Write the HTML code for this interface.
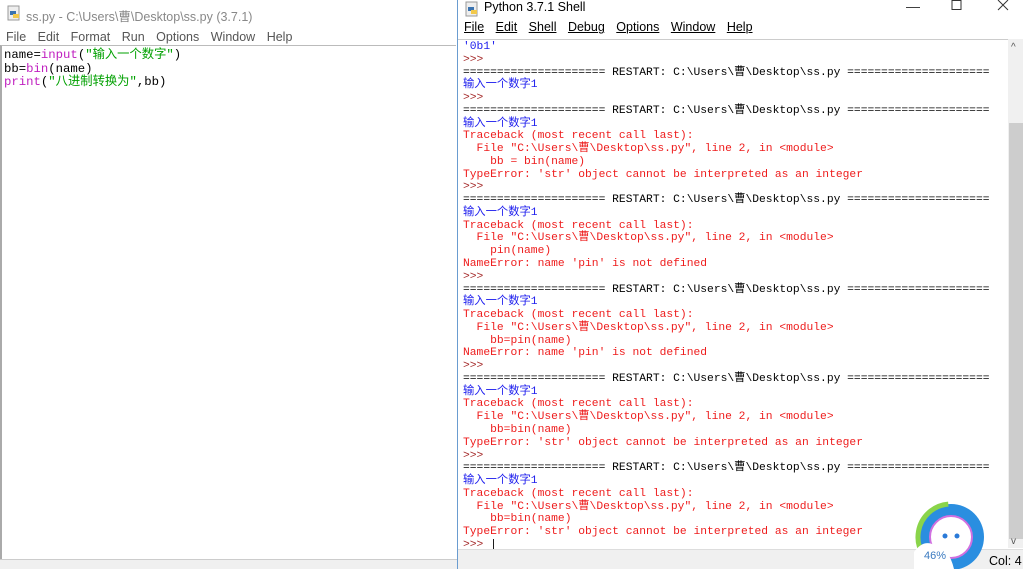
<!DOCTYPE html>
<html><head><meta charset="utf-8"><style>
*{margin:0;padding:0;box-sizing:border-box}
body{width:1023px;height:569px;overflow:hidden;background:#fff;position:relative;font-family:"Liberation Sans","Microsoft YaHei","Noto Sans CJK SC",sans-serif}
.mono{font-family:"Liberation Mono","Noto Sans CJK SC",monospace;font-size:11.3px;white-space:pre}
#left{position:absolute;left:0;top:0;width:458px;height:569px;background:#fff;border-right:1px solid #999}
#left .title{position:absolute;left:26px;top:6px;font-size:12.5px;color:#888}
#left .menu{position:absolute;left:6px;top:30px;font-size:12.5px;color:#555;word-spacing:0}
#left .menu span{margin-right:8px}
#left .ed{position:absolute;left:0;top:45px;width:456px;height:514px;border-top:1px solid #bbb;border-left:2px solid #aaa}
#left .code{position:absolute;left:4px;top:49px;line-height:13.5px;color:#000;font-size:12.3px}
#left .status{position:absolute;left:0;top:559px;width:457px;height:10px;background:#f0f0f0;border-top:1px solid #ccc}
#right{position:absolute;left:457px;top:0;width:566px;height:569px;background:#fff;border-left:1px solid #6a9cd0}
#right .title{position:absolute;left:26px;top:0px;font-size:12.5px;color:#000}
#right .menu{position:absolute;left:6px;top:20px;font-size:12.5px;color:#000}
#right .menu span{margin-right:8px;text-decoration:underline;text-decoration-thickness:1px}
.ctrl{position:absolute;top:-2px;font-size:14px;color:#333}
#right .bd{position:absolute;left:0;top:39px;width:551px;border-top:1px solid #ccc}
#right .txt{position:absolute;left:5px;top:41px;line-height:12.77px;width:545px}
.b{color:#2020ee}.r{color:#ee1c1c}.p{color:#a52a2a}.k{color:#000}.o{color:#c020c0}.g{color:#00a000}
#sb{position:absolute;left:1008px;top:39px;width:15px;height:509px;background:#f0f0f0}
#thumb{position:absolute;left:1009px;top:123px;width:14px;height:416px;background:#cdcdcd}
#st{position:absolute;left:458px;top:549px;width:565px;height:20px;background:#f0f0f0;border-top:1px solid #ddd;font-size:12.5px}
</style></head><body>
<div id="left">
<svg style="position:absolute;left:7px;top:5px" width="15" height="16"><rect x="1" y="1" width="11" height="14" fill="#eee" stroke="#999"/><rect x="3" y="6" width="6" height="4" fill="#3b73b0"/><rect x="6" y="9" width="6" height="4" fill="#f2c94c"/></svg>
<div class="title">ss.py - C:\Users\曹\Desktop\ss.py (3.7.1)</div>
<div class="menu"><span>File</span> <span>Edit</span> <span>Format</span> <span>Run</span> <span>Options</span> <span>Window</span> <span>Help</span></div>
<div class="ed"></div>
<div class="code mono"><span class="k">name=</span><span class="o">input</span><span class="k">(</span><span class="g">"输入一个数字"</span><span class="k">)</span>
bb=<span class="o">bin</span>(name)
<span class="o">print</span>(<span class="g">"八进制转换为"</span>,bb)</div>
<div class="status"></div>
</div>
<div id="right">
<svg style="position:absolute;left:7px;top:1px" width="15" height="16"><rect x="1" y="1" width="11" height="14" fill="#eee" stroke="#999"/><rect x="3" y="6" width="6" height="4" fill="#3b73b0"/><rect x="6" y="9" width="6" height="4" fill="#f2c94c"/></svg>
<div class="title">Python 3.7.1 Shell</div>
<div class="ctrl" style="left:448px">—</div>
<svg style="position:absolute;left:493px;top:0" width="12" height="11"><rect x="1" y="0.5" width="9" height="9" fill="none" stroke="#333"/></svg>
<svg style="position:absolute;left:539px;top:0" width="12" height="11"><path d="M1 0L11 10M11 0L1 10" stroke="#333"/></svg>
<div class="menu"><span>File</span> <span>Edit</span> <span>Shell</span> <span>Debug</span> <span>Options</span> <span>Window</span> <span>Help</span></div>
<div class="bd"></div>
<div class="txt mono"><span class="b">'0b1'</span>
<span class="p">&gt;&gt;&gt;</span>
<span class="k">===================== RESTART: C:\Users\曹\Desktop\ss.py =====================</span>
<span class="b">输入一个数字1</span>
<span class="p">&gt;&gt;&gt;</span>
<span class="k">===================== RESTART: C:\Users\曹\Desktop\ss.py =====================</span>
<span class="b">输入一个数字1</span>
<span class="r">Traceback (most recent call last):
  File "C:\Users\曹\Desktop\ss.py", line 2, in &lt;module&gt;
    bb = bin(name)
TypeError: 'str' object cannot be interpreted as an integer</span>
<span class="p">&gt;&gt;&gt;</span>
<span class="k">===================== RESTART: C:\Users\曹\Desktop\ss.py =====================</span>
<span class="b">输入一个数字1</span>
<span class="r">Traceback (most recent call last):
  File "C:\Users\曹\Desktop\ss.py", line 2, in &lt;module&gt;
    pin(name)
NameError: name 'pin' is not defined</span>
<span class="p">&gt;&gt;&gt;</span>
<span class="k">===================== RESTART: C:\Users\曹\Desktop\ss.py =====================</span>
<span class="b">输入一个数字1</span>
<span class="r">Traceback (most recent call last):
  File "C:\Users\曹\Desktop\ss.py", line 2, in &lt;module&gt;
    bb=pin(name)
NameError: name 'pin' is not defined</span>
<span class="p">&gt;&gt;&gt;</span>
<span class="k">===================== RESTART: C:\Users\曹\Desktop\ss.py =====================</span>
<span class="b">输入一个数字1</span>
<span class="r">Traceback (most recent call last):
  File "C:\Users\曹\Desktop\ss.py", line 2, in &lt;module&gt;
    bb=bin(name)
TypeError: 'str' object cannot be interpreted as an integer</span>
<span class="p">&gt;&gt;&gt;</span>
<span class="k">===================== RESTART: C:\Users\曹\Desktop\ss.py =====================</span>
<span class="b">输入一个数字1</span>
<span class="r">Traceback (most recent call last):
  File "C:\Users\曹\Desktop\ss.py", line 2, in &lt;module&gt;
    bb=bin(name)
TypeError: 'str' object cannot be interpreted as an integer</span>
<span class="p">&gt;&gt;&gt;</span> <span class="k">|</span></div>
</div>
<div id="sb"></div><div id="thumb"></div>
<div style="position:absolute;left:1011px;top:42px;font-size:10px;color:#555">^</div>
<div style="position:absolute;left:1011px;top:536px;font-size:10px;color:#555">v</div>
<div id="st"><span style="position:absolute;left:531px;top:4px">Col: 4</span></div>
<svg style="position:absolute;left:914px;top:500px" width="74" height="69">
<circle cx="37" cy="37" r="33" fill="#2a8ee0"/>
<circle cx="37" cy="37" r="33" fill="none" stroke="#8ad44a" stroke-width="5" stroke-dasharray="95 300" transform="rotate(100 37 37)"/>
<circle cx="37" cy="37" r="21" fill="#fff" stroke="#d070e0" stroke-width="2"/>
<circle cx="31" cy="36" r="2.5" fill="#2a7ad8"/><circle cx="43" cy="36" r="2.5" fill="#2a7ad8"/>
<path d="M0 52 Q10 38 22 46 Q35 48 40 69 L0 69Z" fill="#fff"/>
<text x="10" y="59" font-size="11" fill="#3a7ac0" font-family="Liberation Sans">46%</text>
</svg>
</body></html>
